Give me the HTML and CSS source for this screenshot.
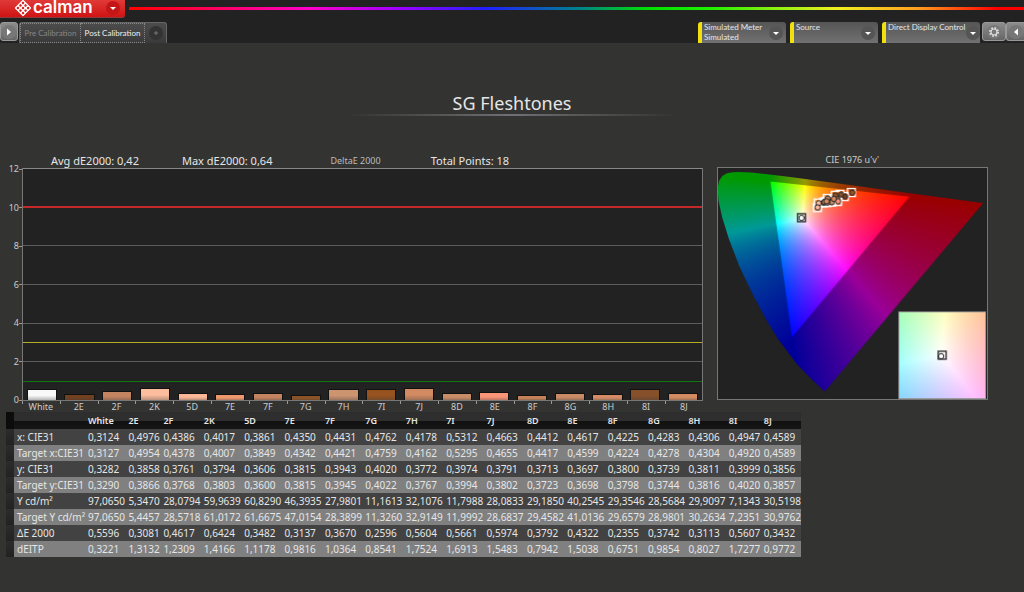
FILE: index.html
```html
<!DOCTYPE html>
<html lang="en">
<head>
  <meta charset="UTF-8">
  <meta name="viewport" content="width=device-width, initial-scale=1.0">
  <title>Calman - SG Fleshtones</title>
  <link rel="stylesheet" href="styles.css">
</head>
<body>
  <header>
    <div class="brand-row">
      <button class="brand" type="button">
        <svg class="brand-mark" viewBox="0 0 18 18" aria-hidden="true">
          <g transform="rotate(45 9 8)">
            <rect x="3" y="2" width="12" height="12" rx="1" fill="#fff"/>
            <g fill="#d8201f">
              <rect x="4.2" y="3.2" width="2.4" height="2.4" rx="1"/>
              <rect x="7.8" y="3.2" width="2.4" height="2.4" rx="1"/>
              <rect x="11.4" y="3.2" width="2.4" height="2.4" rx="1"/>
              <rect x="4.2" y="6.8" width="2.4" height="2.4" rx="1"/>
              <rect x="7.8" y="6.8" width="2.4" height="2.4" rx="1"/>
              <rect x="11.4" y="6.8" width="2.4" height="2.4" rx="1"/>
              <rect x="4.2" y="10.4" width="2.4" height="2.4" rx="1"/>
              <rect x="7.8" y="10.4" width="2.4" height="2.4" rx="1"/>
              <rect x="11.4" y="10.4" width="2.4" height="2.4" rx="1"/>
            </g>
          </g>
        </svg>
        <span class="brand-name">calman</span>
        <svg class="round round-red" viewBox="0 0 14 14" aria-hidden="true"><path d="M4 6h6l-3 3z" fill="#fff"/></svg>
      </button>
      <div class="spectrum"></div>
    </div>

    <div class="toolbar">
      <button class="square-btn" type="button" aria-label="Show workflow">
        <svg class="round" viewBox="0 0 14 14" aria-hidden="true"><path d="M5 3.5v7l4-3.5z" fill="#fff"/></svg>
      </button>
      <nav class="tabs">
        <button class="tab" type="button">Pre Calibration</button>
        <button class="tab active" type="button">Post Calibration</button>
        <button class="tab-add" type="button" aria-label="Add tab">
          <svg class="round round-dark" viewBox="0 0 14 14" aria-hidden="true"><path d="M7 5v4M5 7h4" stroke="#777" fill="none"/></svg>
        </button>
      </nav>
      <div class="devices">
        <button class="device" type="button" aria-haspopup="menu">
          <span class="device-name">Simulated Meter<br>Simulated</span>
          <svg class="round round-dim" viewBox="0 0 14 14" aria-hidden="true"><path d="M4 6h6l-3 3z" fill="#fff"/></svg>
        </button>
        <button class="device" type="button" aria-haspopup="menu">
          <span class="device-name">Source</span>
          <svg class="round round-dim" viewBox="0 0 14 14" aria-hidden="true"><path d="M4 6h6l-3 3z" fill="#fff"/></svg>
        </button>
        <button class="device device-wide" type="button" aria-haspopup="menu">
          <span class="device-name">Direct Display Control</span>
          <svg class="round round-dim" viewBox="0 0 14 14" aria-hidden="true"><path d="M4 6h6l-3 3z" fill="#fff"/></svg>
        </button>
      </div>
      <button class="square-btn gear-btn" type="button" aria-label="Settings">
        <svg class="round" viewBox="0 0 14 14" aria-hidden="true">
          <circle cx="7" cy="7" r="4" fill="none" stroke="#ddd" stroke-width="2" stroke-dasharray="1.6 1.54"/>
          <circle cx="7" cy="7" r="3" fill="none" stroke="#ddd" stroke-width="1.2"/>
        </svg>
      </button>
      <button class="square-btn edge-btn" type="button" aria-label="Collapse">
        <svg class="round" viewBox="0 0 14 14" aria-hidden="true"><path d="M9 3.5v7l-4-3.5z" fill="#fff"/></svg>
      </button>
    </div>
  </header>

  <main>
    <h1>SG Fleshtones</h1>

    <div class="charts">
      <section class="delta">
        <div class="delta-info">
          <span>Avg dE2000: 0,42</span>
          <span>Max dE2000: 0,64</span>
          <span class="delta-title">DeltaE 2000</span>
          <span>Total Points: 18</span>
        </div>
        <div class="delta-body">
          <div class="y-axis">
            <span>12</span><span>10</span><span>8</span><span>6</span><span>4</span><span>2</span><span>0</span>
          </div>
          <div class="plot">
            <div class="grid-row"></div>
            <div class="grid-row"></div>
            <div class="grid-row"></div>
            <div class="grid-row"></div>
            <div class="grid-row"></div>
            <div class="grid-row"></div>
            <div class="limit limit-red"></div>
            <div class="limit limit-yellow"></div>
            <div class="limit limit-green"></div>
            <div class="bars" id="bars"></div>
          </div>
        </div>
        <div class="x-axis" id="x-axis"></div>
      </section>

      <section class="cie">
        <h2>CIE 1976 u'v'</h2>
        <canvas id="cie" width="270" height="232" role="img" aria-label="CIE 1976 chart"></canvas>
      </section>
    </div>

    <table>
      <colgroup id="cols"></colgroup>
      <thead id="table-head"></thead>
      <tbody id="table-body"></tbody>
    </table>
  </main>

  <script src="script.js"></script>
</body>
</html>
```

FILE: styles.css
```css
* {
  box-sizing: border-box;
  margin: 0;
  padding: 0;
}

body {
  font-family: "Noto Sans", "Open Sans", sans-serif;
  background-color: #333331;
  color: #e6e6e6;
  min-height: 100vh;
}

button {
  font-family: Lato, sans-serif;
  border: none;
  color: inherit;
  cursor: pointer;
}

header {
  background-color: #222;
}

.brand-row {
  display: flex;
  align-items: flex-start;
  gap: 4px;
  height: 22px;
}

.brand {
  display: flex;
  align-items: flex-start;
  width: 125px;
  height: 18px;
  padding: 0 5px 0 14px;
  background: linear-gradient(#e03a38, #cf1414);
  border-bottom: 1px solid #8d3a38;
  border-radius: 0 0 3px 0;
}

.brand-mark {
  width: 18px;
  height: 18px;
  flex: none;
}

.brand-name {
  flex: 1;
  text-align: left;
  font-family: Inter, sans-serif;
  font-size: 17px;
  font-weight: 600;
  line-height: 15px;
  padding-left: 1px;
  color: #fff;
}

.round {
  width: 14px;
  height: 14px;
  flex: none;
  border-radius: 50%;
  background-color: #777;
}

.round-red {
  margin-top: 1px;
  background-color: #c41616;
}

.round-dark {
  background-color: #333;
}

.round-dim {
  background-color: #555;
}

.spectrum {
  flex: 1;
  height: 3px;
  margin-top: 7px;
  background: linear-gradient(90deg, #f00, #ff00c8 20%, #a000ff 30%, #2020ff 40%, #008090 50%, #00e000 58%, #20f000 65%, #f0f020 79%, #ffa020 88%, #f00 97%);
}

.toolbar {
  display: flex;
  height: 21px;
}

.square-btn {
  display: flex;
  align-items: center;
  justify-content: center;
  width: 18px;
  height: 19px;
  background: linear-gradient(#8c8c8c, #666);
  border: 1px solid #999;
  border-radius: 3px;
}

.tabs {
  display: flex;
  margin-left: 1px;
  background: linear-gradient(#4c4c4c, #3a3a3a);
  border: 1px solid #666;
  border-bottom: none;
  border-radius: 3px 3px 0 0;
}

.tab {
  width: 61px;
  font-size: 8px;
  white-space: nowrap;
  color: #858585;
  background: none;
  border: 1px dotted #888;
}

.tab.active {
  width: 64px;
  color: #eee;
  border-left: none;
}

.tab-add {
  width: 21px;
  padding-top: 3px;
  background: none;
}

.devices {
  display: flex;
  gap: 4px;
  margin-left: auto;
}

.device {
  display: flex;
  justify-content: space-between;
  align-items: center;
  width: 88px;
  padding-right: 3px;
  background: linear-gradient(#555, #717171);
  border-left: 4px solid #f0e010;
  border-radius: 3px 3px 0 0;
}

.device-wide {
  width: 98px;
}

.device-name {
  align-self: flex-start;
  padding-left: 2px;
  font-size: 8px;
  line-height: 10px;
  text-align: left;
  white-space: nowrap;
}

.gear-btn {
  width: 24px;
  margin-left: 2px;
}

.edge-btn {
  border-right: none;
  border-radius: 3px 0 0 3px;
}

main {
  padding: 49px 6px 0;
}

h1 {
  width: 328px;
  margin: 0 auto;
  font-size: 18px;
  font-weight: normal;
  line-height: 22px;
  text-align: center;
  border-bottom: 2px solid;
  border-image: linear-gradient(90deg, transparent, #707075, transparent) 1;
}

.charts {
  display: flex;
  gap: 14px;
  padding: 37px 30px 0 0;
}

.delta {
  flex: 696;
}

.delta-info {
  display: flex;
  align-items: center;
  height: 15px;
  padding-left: 45px;
  font-size: 11px;
  gap: 43px;
}

.delta-title {
  margin: 0 7px 0 15px;
  font-size: 9px;
  color: #bbb;
}

.delta-body {
  display: flex;
}

.y-axis {
  display: flex;
  flex-direction: column;
  justify-content: space-between;
  width: 16px;
  margin: -5px 0;
  font-size: 9px;
  line-height: 12px;
  text-align: right;
  color: #ccc;
}

.y-axis span {
  padding-right: 3px;
  background: linear-gradient(#999, #999) right center / 3px 1px no-repeat;
}

.plot {
  position: relative;
  flex: 1;
  display: grid;
  grid-template-rows: repeat(6, 1fr);
  height: 233px;
  background-color: #222;
  border: 1px solid #777;
  border-top: none;
}

.grid-row {
  border-top: 1px solid #5c5c5c;
}

.grid-row:first-child {
  border-color: #888;
}

.limit {
  position: absolute;
  left: 0;
  right: 0;
  border-top: 1px solid;
}

.limit-red {
  top: 16.5%;
  border-top-width: 2px;
  border-color: #c42828;
}

.limit-yellow {
  top: 75%;
  border-color: #b5ae20;
}

.limit-green {
  top: 91.6%;
  border-color: #0b7a0b;
}

.bars {
  position: absolute;
  inset: 0;
  display: grid;
  grid-template-columns: repeat(18, 1fr);
  align-items: end;
  justify-items: center;
}

.bar {
  width: 80%;
  border: 1px solid #111;
  border-bottom: none;
  background-image: linear-gradient(transparent 55%, rgba(60, 60, 60, 0.35));
}

.x-axis {
  display: grid;
  grid-template-columns: repeat(18, 1fr);
  margin-left: 16px;
  font-size: 9px;
  line-height: 11px;
  text-align: center;
  color: #ccc;
}

.x-axis span {
  background: linear-gradient(#999, #999) left top / 1px 3px no-repeat;
}

.cie {
  flex: 271;
}

.cie h2 {
  height: 14px;
  font-size: 9px;
  font-weight: normal;
  line-height: 14px;
  text-align: center;
  color: #ccc;
}

.cie canvas {
  display: block;
  width: 100%;
  background-color: #222;
  border: 1px solid #777;
}

table {
  width: 78.6%;
  table-layout: fixed;
  border-collapse: collapse;
  font-size: 10px;
  line-height: 16px;
}

.col-mark {
  width: 8px;
}

.col-label {
  width: 71px;
}

.col-narrow {
  width: 35px;
}

th,
td {
  height: 16px;
  padding-left: 3px;
  text-align: left;
  font-weight: normal;
  white-space: nowrap;
}

thead th {
  height: 17px;
  font-size: 9px;
  font-weight: 600;
  background: linear-gradient(#2e2e2e 50%, #111 55%, #161616);
}

thead th:first-child {
  background: #0c0c0c;
}

tbody tr {
  background-color: #424242;
}

tbody tr:nth-child(even) {
  background-color: #808080;
}

tbody .mark {
  background: linear-gradient(#2c2c2c, #222);
}
```

FILE: script.js
```js
const patches = ['White', '2E', '2F', '2K', '5D', '7E', '7F', '7G', '7H', '7I', '7J', '8D', '8E', '8F', '8G', '8H', '8I', '8J'];

const colors = ['#f8f8f8', '#70401f', '#c48462', '#fcbd9e', '#fbb797', '#f0996e', '#c58460', '#8c5426', '#cd9470',
  '#965320', '#d28a62', '#c98d68', '#fb9577', '#c68259', '#c98b66', '#d58c66', '#86502a', '#d58b62'];

const rows = [
  ['x: CIE31', '0,3124 0,4976 0,4386 0,4017 0,3861 0,4350 0,4431 0,4762 0,4178 0,5312 0,4663 0,4412 0,4617 0,4225 0,4283 0,4306 0,4947 0,4589'],
  ['Target x:CIE31', '0,3127 0,4954 0,4378 0,4007 0,3849 0,4342 0,4421 0,4759 0,4162 0,5295 0,4655 0,4417 0,4599 0,4224 0,4278 0,4304 0,4920 0,4589'],
  ['y: CIE31', '0,3282 0,3858 0,3761 0,3794 0,3606 0,3815 0,3943 0,4020 0,3772 0,3974 0,3791 0,3713 0,3697 0,3800 0,3739 0,3811 0,3999 0,3856'],
  ['Target y:CIE31', '0,3290 0,3866 0,3768 0,3803 0,3600 0,3815 0,3945 0,4022 0,3767 0,3994 0,3802 0,3723 0,3698 0,3798 0,3744 0,3816 0,4020 0,3857'],
  ['Y cd/m²', '97,0650 5,3470 28,0794 59,9639 60,8290 46,3935 27,9801 11,1613 32,1076 11,7988 28,0833 29,1850 40,2545 29,3546 28,5684 29,9097 7,1343 30,5198'],
  ['Target Y cd/m²', '97,0650 5,4457 28,5718 61,0172 61,6675 47,0154 28,3899 11,3260 32,9149 11,9992 28,6837 29,4582 41,0136 29,6579 28,9801 30,2634 7,2351 30,9762'],
  ['ΔE 2000', '0,5596 0,3081 0,4617 0,6424 0,3482 0,3137 0,3670 0,2596 0,5604 0,5661 0,5974 0,3792 0,4322 0,2355 0,3742 0,3113 0,5607 0,3432'],
  ['dEITP', '0,3221 1,3132 1,2309 1,4166 1,1178 0,9816 1,0364 0,8541 1,7524 1,6913 1,5483 0,7942 1,5038 0,6751 0,9854 0,8027 1,7277 0,9772']
].map(([label, values]) => ({ label, values: values.split(' ') }));

const numbers = (index) => rows[index].values.map((v) => parseFloat(v.replace(',', '.')));

const addElement = (parent, tag, text = '', className = '') => {
  const el = document.createElement(tag);
  el.textContent = text;
  if (className) el.className = className;
  parent.appendChild(el);
  return el;
};

const drawBars = () => {
  const bars = document.getElementById('bars');
  const axis = document.getElementById('x-axis');
  numbers(6).forEach((value, i) => {
    const bar = addElement(bars, 'div', '', 'bar');
    bar.style.height = `${value / 12 * 100}%`;
    bar.style.backgroundColor = colors[i];
    addElement(axis, 'span', patches[i]);
  });
};

const fillTable = () => {
  const cols = document.getElementById('cols');
  addElement(cols, 'col', '', 'col-mark');
  addElement(cols, 'col', '', 'col-label');
  patches.forEach((name) => {
    addElement(cols, 'col', '', name === '2E' || name === '8I' ? 'col-narrow' : '');
  });

  const head = addElement(document.getElementById('table-head'), 'tr');
  addElement(head, 'th');
  addElement(head, 'th');
  patches.forEach((name) => addElement(head, 'th', name).scope = 'col');

  rows.forEach((row) => {
    const tr = addElement(document.getElementById('table-body'), 'tr');
    addElement(tr, 'td', '', 'mark');
    addElement(tr, 'th', row.label).scope = 'row';
    row.values.forEach((value) => addElement(tr, 'td', value));
  });
};

// spectral locus, CIE 1931 x,y
const locus = [
  [.1714, .0051], [.1644, .0109], [.1566, .0177], [.1440, .0297], [.1241, .0578], [.1096, .0868], [.0913, .1327],
  [.0687, .2007], [.0454, .2950], [.0235, .4127], [.0082, .5384], [.0039, .6548], [.0139, .7502], [.0389, .8120],
  [.0743, .8338], [.1142, .8262], [.1547, .8059], [.2296, .7543], [.3016, .6923], [.3731, .6245], [.4441, .5547],
  [.5125, .4866], [.5752, .4242], [.6270, .3725], [.6915, .3083], [.7347, .2653]
];
const gamut = [[.64, .33], [.30, .60], [.15, .06]];

const canvas = document.getElementById('cie');
const ctx = canvas.getContext('2d');
const maxU = 0.63;
const maxV = 0.6;

const toUv = ([x, y]) => {
  const d = -2 * x + 12 * y + 3;
  return [4 * x / d, 9 * y / d];
};

const toPixel = (xy) => {
  const [u, v] = toUv(xy);
  return [u / maxU * canvas.width - 1, (1 - v / maxV) * canvas.height - 1];
};

const uvToRgb = (u, v, gamma) => {
  const X = 9 * u / (4 * v);
  const Z = (12 - 3 * u - 20 * v) / (4 * v);
  const rgb = [
    3.2406 * X - 1.5372 - 0.4986 * Z,
    -0.9689 * X + 1.8758 + 0.0415 * Z,
    0.0557 * X - 0.2040 + 1.0570 * Z
  ].map((c) => Math.max(c, 0));
  const max = Math.max(...rgb);
  return rgb.map((c) => 255 * Math.pow(c / max, 1 / gamma));
};

// fills an offscreen canvas with the colours of a u'v' range
const colorField = (w, h, u0, u1, v0, v1, level, gamma) => {
  const field = document.createElement('canvas');
  field.width = w;
  field.height = h;
  const fieldCtx = field.getContext('2d');
  const image = fieldCtx.createImageData(w, h);
  for (let y = 0; y < h; y++) {
    for (let x = 0; x < w; x++) {
      const u = u0 + (u1 - u0) * (x + 0.5) / w;
      const v = v1 - (v1 - v0) * (y + 0.5) / h;
      const [r, g, b] = uvToRgb(u, v, gamma);
      image.data.set([r * level, g * level, b * level, 255], (y * w + x) * 4);
    }
  }
  fieldCtx.putImageData(image, 0, 0);
  return field;
};

const drawClipped = (points, level) => {
  ctx.save();
  ctx.beginPath();
  points.forEach((xy) => ctx.lineTo(...toPixel(xy)));
  ctx.closePath();
  ctx.clip();
  ctx.drawImage(colorField(canvas.width, canvas.height, 0, maxU, 0, maxV, level, 1.2), 0, 0);
  ctx.restore();
};

const drawSquare = (x, y, color) => {
  ctx.strokeStyle = color;
  ctx.lineWidth = 1.3;
  ctx.strokeRect(x - 4, y - 4, 8, 8);
};

const drawDot = (x, y, color) => {
  ctx.beginPath();
  ctx.arc(x, y, 2.7, 0, Math.PI * 2);
  ctx.fillStyle = color;
  ctx.fill();
  ctx.strokeStyle = '#222';
  ctx.lineWidth = 1;
  ctx.stroke();
};

const drawCie = () => {
  drawClipped(locus, 0.6);
  drawClipped(gamut, 1);

  const targetX = numbers(1);
  const targetY = numbers(3);
  const x = numbers(0);
  const y = numbers(2);
  patches.forEach((name, i) => drawSquare(...toPixel([targetX[i], targetY[i]]), i ? '#fff' : '#222'));
  patches.forEach((name, i) => drawDot(...toPixel([x[i], y[i]]), colors[i]));

  // white point close-up
  const size = 86;
  const left = canvas.width - size - 2;
  const top = canvas.height - size - 1;
  ctx.drawImage(colorField(size, size, 0.168, 0.228, 0.438, 0.498, 1, 1.8), left, top);
  ctx.strokeStyle = '#999';
  ctx.lineWidth = 1;
  ctx.strokeRect(left - 0.5, top - 0.5, size + 1, size + 1);
  drawSquare(left + size / 2, top + size / 2, '#222');
  drawDot(left + size / 2 - 1, top + size / 2 + 1, '#fff');
};

drawBars();
fillTable();
drawCie();
```
